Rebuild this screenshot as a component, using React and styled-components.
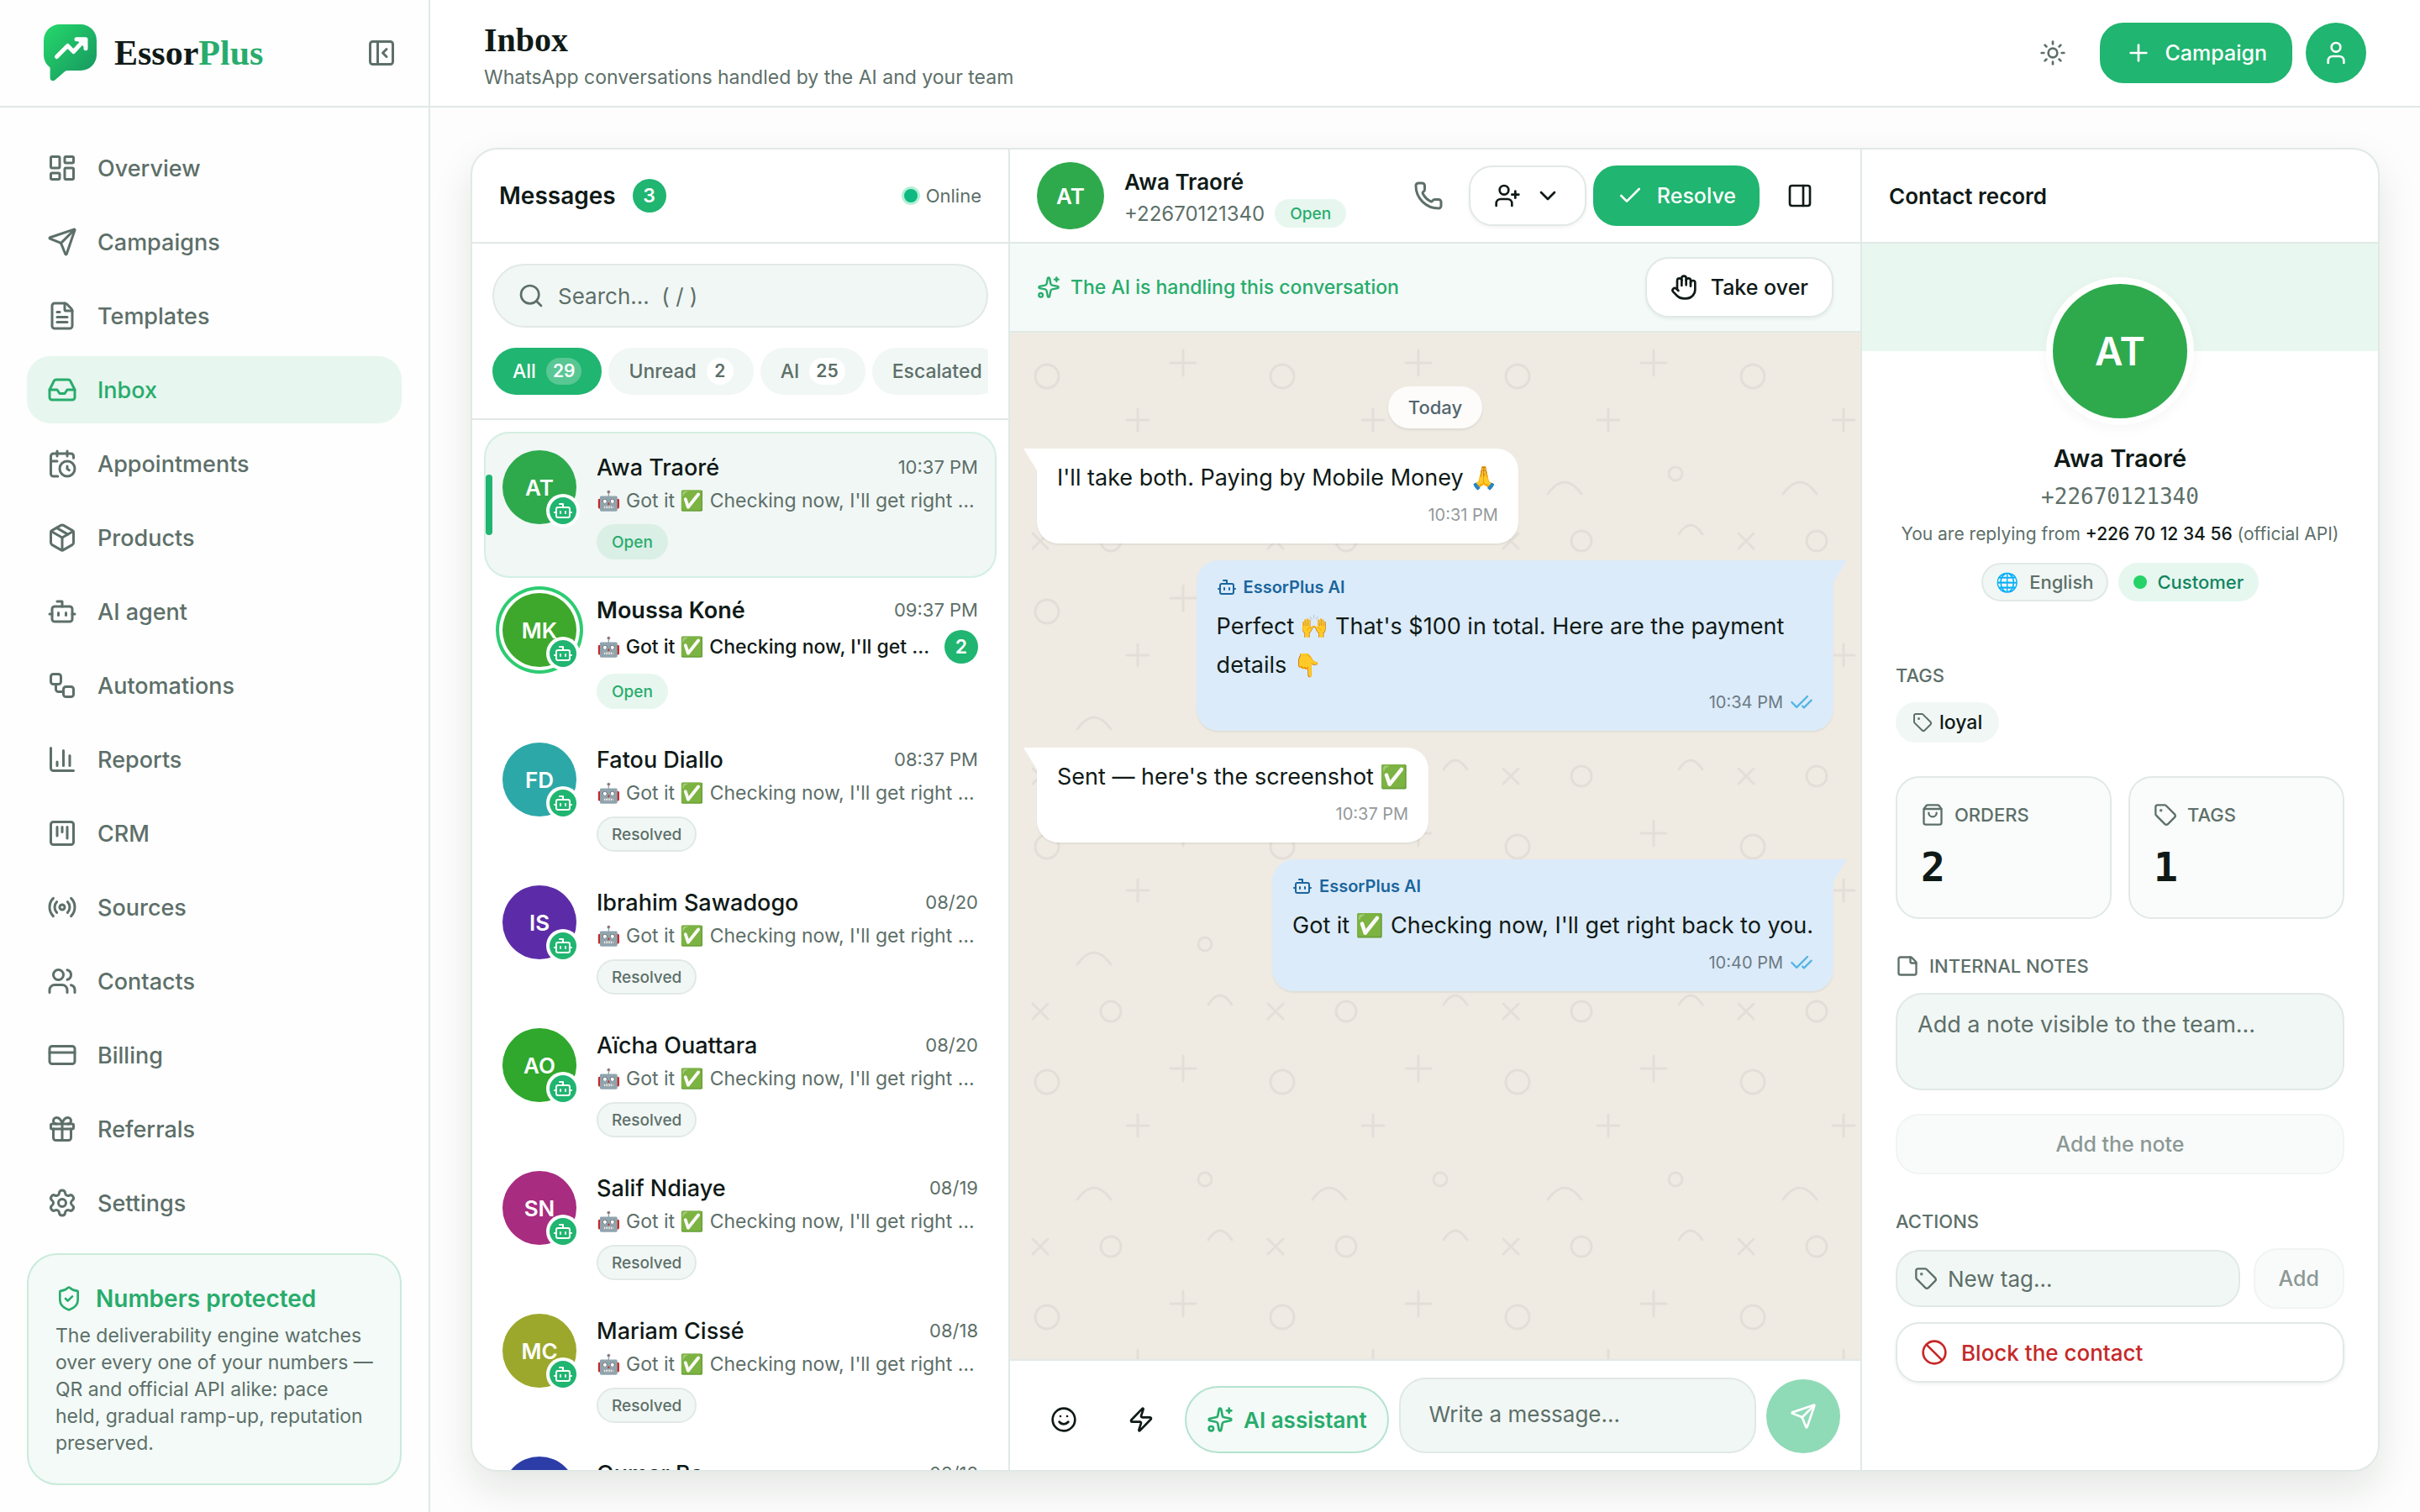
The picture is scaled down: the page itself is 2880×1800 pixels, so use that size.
import React from 'react';
import styled, { createGlobalStyle, css } from 'styled-components';
import {
  Ban, Bot, CalendarClock, ChartColumn, Check, CheckCheck, ChevronDown, CreditCard, FileText,
  Gift, Hand, Inbox, LayoutDashboard, Package, PanelLeftClose, PanelRight, Phone, Plus, Radio,
  Search, Send, Settings, ShieldCheck, ShoppingBag, Smile, Sparkles, SquareKanban, StickyNote,
  Sun, Tag, User, UserPlus, Users, Workflow, Zap,
} from 'lucide-react';

const colors = {
  primary: '#20b570',
  primaryText: '#28ac6c',
  soft: '#e7f6ef',
  softer: '#f3faf7',
  field: '#f1f7f5',
  border: '#e1e9e6',
  text: '#0f1a17',
  muted: '#5d6f69',
};

const GlobalStyle = createGlobalStyle`
  *, *::before, *::after {
    box-sizing: border-box;
  }

  body {
    margin: 0;
    background: #fcfdfc;
    color: ${colors.text};
    font-family: Inter, "Noto Color Emoji", sans-serif;
    font-size: 24px;
  }

  button, input, textarea {
    font: inherit;
    color: inherit;
    margin: 0;
  }

  h1, h2, h3, p, ul {
    margin: 0;
    padding: 0;
  }
`;

/* Shell */

const Shell = styled.div`
  display: grid;
  grid-template-columns: 512px minmax(0, 1fr);
  height: 100vh;
`;

const Sidebar = styled.aside`
  display: flex;
  flex-direction: column;
  min-height: 0;
  background: #fdfefd;
  border-right: 2px solid ${colors.border};
`;

const Brand = styled.div`
  flex: none;
  display: flex;
  align-items: center;
  height: 128px;
  padding: 0 32px 0 52px;
  border-bottom: 2px solid ${colors.border};
`;

const BrandName = styled.span`
  flex: 1;
  margin-left: 20px;
  font-family: "Liberation Serif", serif;
  font-size: 42px;
  font-weight: 700;

  span {
    color: ${colors.primaryText};
  }
`;

const IconButton = styled.button`
  flex: none;
  display: flex;
  align-items: center;
  justify-content: center;
  width: ${p => p.$size || 80}px;
  height: ${p => p.$size || 80}px;
  padding: 0;
  border: 0;
  border-radius: 50%;
  background: ${p => (p.$filled ? colors.primary : 'transparent')};
  color: ${p => (p.$filled ? '#fff' : p.$dark ? colors.text : colors.muted)};
`;

const Nav = styled.nav`
  flex: 1;
  display: flex;
  flex-direction: column;
  gap: 8px;
  min-height: 0;
  padding: 32px 32px 0;
`;

const NavLink = styled.a`
  flex: none;
  display: flex;
  align-items: center;
  gap: 24px;
  height: 80px;
  padding: 0 24px;
  border-radius: 28px;
  font-size: 27px;
  font-weight: 500;
  text-decoration: none;
  color: ${p => (p.$active ? colors.primaryText : colors.muted)};
  background: ${p => (p.$active ? colors.soft : 'transparent')};
`;

const Notice = styled.section`
  margin: 0 32px 32px;
  padding: 32px;
  border: 2px solid #c9ebdb;
  border-radius: 36px;
  background: ${colors.softer};
`;

const NoticeTitle = styled.h3`
  display: flex;
  align-items: center;
  gap: 16px;
  margin-bottom: 8px;
  font-size: 28px;
  line-height: 40px;
  font-weight: 600;
  color: ${colors.primaryText};
`;

const NoticeText = styled.p`
  font-size: 23px;
  line-height: 32px;
  color: ${colors.muted};
`;

const Main = styled.main`
  display: flex;
  flex-direction: column;
  min-width: 0;
  min-height: 0;
`;

const TopBar = styled.header`
  flex: none;
  display: flex;
  align-items: center;
  gap: 16px;
  height: 128px;
  padding: 0 64px;
  border-bottom: 2px solid ${colors.border};
  background: #fff;
`;

const PageTitle = styled.h1`
  font-family: "Liberation Serif", serif;
  font-size: 40px;
  line-height: 48px;
  font-weight: 700;
`;

const PageHeading = styled.div`
  flex: 1;
  padding-top: 10px;
`;

const PageSubtitle = styled.p`
  font-size: 23px;
  line-height: 40px;
  color: ${colors.muted};
`;

const Button = styled.button`
  display: flex;
  align-items: center;
  justify-content: ${p => (p.$start ? 'flex-start' : 'center')};
  gap: 16px;
  width: ${p => (p.$block ? '100%' : 'auto')};
  height: 72px;
  padding: 0 ${p => (p.$wide ? 28 : 26)}px;
  border: 2px solid ${colors.border};
  border-radius: 28px;
  background: #fff;
  box-shadow: 0 2px 4px rgba(15, 26, 23, 0.06);
  font-size: 25px;
  font-weight: 500;
  white-space: nowrap;

  ${p => p.$primary && css`
    border-color: ${colors.primary};
    background: ${colors.primary};
    box-shadow: none;
    color: #fff;
  `}

  ${p => p.$danger && css`
    font-size: 26px;
    color: #c62828;
  `}

  &:disabled {
    background: #f9fbfa;
    border-color: #f0f4f2;
    box-shadow: none;
    color: #8c9895;
  }
`;

const Panel = styled.div`
  flex: 1;
  display: grid;
  grid-template-columns: 640px minmax(0, 1fr) 614px;
  min-height: 0;
  margin: 48px;
  border: 2px solid ${colors.border};
  border-radius: 32px;
  background: #fff;
  box-shadow: 0 20px 48px rgba(15, 26, 23, 0.1);
  overflow: hidden;
`;

const Column = styled.section`
  display: flex;
  flex-direction: column;
  min-width: 0;
  min-height: 0;
  border-right: ${p => (p.$last ? '0' : `2px solid ${colors.border}`)};
`;

const ColumnHeader = styled.header`
  flex: none;
  display: flex;
  align-items: center;
  height: 112px;
  padding: 0 32px;
  border-bottom: 2px solid ${colors.border};
`;

const ColumnTitle = styled.h2`
  font-size: ${p => (p.$small ? 26 : 28)}px;
  font-weight: 600;
`;

/* Conversation list */

const CountBadge = styled.span`
  flex: none;
  display: flex;
  align-items: center;
  justify-content: center;
  width: 40px;
  height: 40px;
  border-radius: 50%;
  background: ${colors.primary};
  color: #fff;
  font-size: 23px;
  font-weight: 600;
`;

const ListHeader = styled(ColumnHeader)`
  gap: 20px;
`;

const OnlineStatus = styled.span`
  display: flex;
  align-items: center;
  gap: 10px;
  margin-left: auto;
  font-size: 22px;
  color: ${colors.muted};

  &::before {
    content: '';
    width: 16px;
    height: 16px;
    border-radius: 50%;
    background: #10b981;
    box-shadow: 0 0 0 3px #b4f0d6;
  }
`;

const Filters = styled.div`
  padding: 24px 24px 28px;
  border-bottom: 2px solid ${colors.border};
`;

const SearchBox = styled.label`
  display: flex;
  align-items: center;
  gap: 16px;
  height: 76px;
  padding: 0 28px;
  border: 2px solid ${colors.border};
  border-radius: 38px;
  background: ${colors.field};
  color: ${colors.muted};
`;

const PlainInput = styled.input`
  flex: 1;
  min-width: 0;
  padding: 0;
  border: 0;
  outline: 0;
  background: transparent;
  font-size: 26px;

  &::placeholder {
    color: ${colors.muted};
    opacity: 1;
  }
`;

const Chips = styled.div`
  display: flex;
  gap: 8px;
  margin-top: 24px;
  overflow: hidden;
`;

const Chip = styled.button`
  flex: none;
  display: flex;
  align-items: center;
  gap: 12px;
  height: 56px;
  padding: 0 24px;
  border: 0;
  border-radius: 28px;
  background: ${p => (p.$active ? colors.primary : colors.field)};
  color: ${p => (p.$active ? '#fff' : colors.muted)};
  font-size: 23px;
  font-weight: 500;

  span {
    min-width: 32px;
    padding: 0 8px;
    border-radius: 16px;
    background: ${p => (p.$active ? 'rgba(255, 255, 255, 0.25)' : '#fff')};
    font-size: 21px;
    line-height: 32px;
    font-weight: 600;
  }
`;

const Conversations = styled.ul`
  flex: 1;
  min-height: 0;
  padding: 16px;
  overflow: hidden;
  list-style: none;
`;

const Conversation = styled.li`
  position: relative;
  display: flex;
  gap: 24px;
  padding: 20px;
  border-radius: 28px;

  ${p => p.$active && css`
    background: ${colors.field};
    box-shadow: 0 0 0 2px #d3efe2;

    &::before {
      content: '';
      position: absolute;
      left: 0;
      top: 50%;
      width: 8px;
      height: 72px;
      margin-top: -36px;
      border-radius: 4px;
      background: ${colors.primary};
    }
  `}
`;

const Avatar = styled.div`
  position: relative;
  flex: none;
  display: flex;
  align-items: center;
  justify-content: center;
  width: ${p => p.$size || 88}px;
  height: ${p => p.$size || 88}px;
  border-radius: 50%;
  background: ${p => p.$color};
  color: #fff;
  font-size: ${p => p.$font || 26}px;
  font-weight: 600;
  box-shadow: ${p => (p.$ring ? '0 0 0 4px #fff, 0 0 0 8px #2ecc71' : 'none')};
`;

const BotMark = styled.span`
  position: absolute;
  right: 0;
  bottom: 0;
  display: flex;
  align-items: center;
  justify-content: center;
  width: 32px;
  height: 32px;
  border-radius: 50%;
  background: ${colors.primary};
  box-shadow: 0 0 0 4px #fff;
`;

const ConversationBody = styled.div`
  flex: 1;
  min-width: 0;
`;

const ConversationTop = styled.div`
  display: flex;
  align-items: center;
  justify-content: space-between;
  height: 40px;
  font-size: 22px;
  color: ${colors.muted};

  strong {
    font-size: 27px;
    font-weight: ${p => (p.$unread ? 600 : 500)};
    color: ${colors.text};
  }
`;

const ConversationPreview = styled.div`
  display: flex;
  align-items: center;
  gap: 16px;
  margin: 4px 0 12px;
  font-size: 23px;
  line-height: 32px;
  font-weight: ${p => (p.$unread ? 500 : 400)};
  color: ${p => (p.$unread ? colors.text : colors.muted)};

  p {
    flex: 1;
    overflow: hidden;
    text-overflow: ellipsis;
    white-space: nowrap;
  }
`;

const StatusTag = styled.span`
  display: inline-flex;
  align-items: center;
  height: ${p => (p.$compact ? 34 : 42)}px;
  padding: 0 16px;
  border: 2px solid ${p => (p.$open ? 'transparent' : colors.border)};
  border-radius: 21px;
  background: ${p => (p.$open ? 'rgba(32, 181, 112, 0.11)' : colors.field)};
  color: ${p => (p.$open ? colors.primaryText : colors.muted)};
  font-size: 19px;
  font-weight: 500;
`;

/* Chat */

const ChatHeader = styled(ColumnHeader)`
  gap: 8px;
`;

const ChatPerson = styled.div`
  flex: 1;
  margin-left: 16px;
  padding-top: 6px;

  strong {
    display: block;
    font-size: 26px;
    line-height: 36px;
    font-weight: 600;
  }
`;

const ChatNumber = styled.div`
  display: flex;
  align-items: center;
  gap: 12px;
  height: 38px;
  font-size: 24px;
  color: ${colors.muted};
`;

const HandlingBar = styled.div`
  flex: none;
  display: flex;
  align-items: center;
  gap: 12px;
  height: 106px;
  padding: 0 32px;
  border-bottom: 2px solid ${colors.border};
  background: ${colors.softer};
  color: ${colors.primaryText};
  font-size: 23px;
  font-weight: 500;

  ${Button} {
    margin-left: auto;
    color: ${colors.text};
  }
`;

const Thread = styled.div`
  position: relative;
  flex: 1;
  display: flex;
  flex-direction: column;
  gap: 20px;
  min-height: 0;
  padding: 64px 32px;
  overflow: hidden;
  background: #efebe3;
`;

const ThreadPattern = styled.svg`
  position: absolute;
  inset: 0;
  width: 100%;
  height: 100%;
`;

const DayLabel = styled.span`
  position: relative;
  align-self: center;
  margin-bottom: 4px;
  padding: 0 24px;
  border-radius: 25px;
  background: #fdfcfb;
  box-shadow: 0 2px 3px rgba(15, 26, 23, 0.08);
  color: #54656f;
  font-size: 22px;
  line-height: 50px;
  font-weight: 500;
`;

const Bubble = styled.article`
  position: relative;
  align-self: ${p => (p.$own ? 'flex-end' : 'flex-start')};
  max-width: 80%;
  padding: 12px 24px 17px;
  border-radius: ${p => (p.$own ? '26px 0 26px 26px' : '0 26px 26px 26px')};
  background: ${p => (p.$own ? '#dcebf9' : '#fff')};
  box-shadow: 0 2px 2px rgba(15, 26, 23, 0.06);
  font-size: 27px;
  line-height: 46px;

  &::before {
    content: '';
    position: absolute;
    top: 0;
    width: 16px;
    height: 26px;
    background: inherit;
    ${p => (p.$own
      ? 'left: 100%; clip-path: polygon(0 0, 100% 0, 0 100%);'
      : 'right: 100%; clip-path: polygon(0 0, 100% 0, 100% 100%);')}
  }
`;

const BubbleAuthor = styled.div`
  display: flex;
  align-items: center;
  gap: 8px;
  margin-bottom: 4px;
  font-size: 20px;
  line-height: 40px;
  font-weight: 600;
  color: #1a659e;
`;

const BubbleTime = styled.footer`
  display: flex;
  align-items: center;
  justify-content: flex-end;
  gap: 8px;
  margin-top: 4px;
  font-size: 20px;
  line-height: 34px;
  color: ${p => (p.$own ? '#6b7a84' : '#94999c')};

  svg {
    color: #53b5e4;
  }
`;

const Composer = styled.form`
  flex: none;
  display: flex;
  align-items: flex-end;
  gap: 12px;
  padding: 20px 24px;
  border-top: 2px solid ${colors.border};
`;

const AssistantButton = styled.button`
  display: flex;
  align-items: center;
  gap: 12px;
  height: 80px;
  padding: 0 24px;
  border: 2px solid #b5e3cf;
  border-radius: 40px;
  background: ${colors.softer};
  color: ${colors.primaryText};
  font-size: 26px;
  font-weight: 600;
  white-space: nowrap;
`;

const TextArea = styled.textarea`
  display: block;
  width: 100%;
  height: 116px;
  padding: 16px 24px;
  border: 2px solid ${colors.border};
  border-radius: 32px;
  outline: 0;
  resize: none;
  background: ${colors.field};
  font-size: 27px;
  line-height: 40px;

  &::placeholder {
    color: ${colors.muted};
    opacity: 1;
  }
`;

const MessageField = styled(TextArea)`
  flex: 1;
  min-width: 0;
  height: 90px;
  padding: 22px 34px;
  font-size: 26px;
`;

const SendButton = styled(IconButton)`
  background: #8fdab7;
  color: #fff;
`;

/* Contact record */

const Cover = styled.div`
  flex: none;
  height: 128px;
  background: #e9f7f1;
`;

const Profile = styled.div`
  display: flex;
  flex-direction: column;
  align-items: center;
  margin-top: -80px;

  h3 {
    margin-top: 28px;
    font-size: 29px;
    line-height: 40px;
    font-weight: 600;
  }
`;

const ProfileAvatar = styled(Avatar)`
  box-shadow: 0 0 0 8px #fff, 0 4px 16px 8px rgba(15, 26, 23, 0.04);
`;

const ProfileNumber = styled.p`
  margin-top: 8px;
  font-family: "DejaVu Sans Mono", monospace;
  font-size: 26px;
  line-height: 34px;
  color: ${colors.muted};
`;

const ProfileSender = styled.p`
  margin-top: 12px;
  font-size: 21px;
  line-height: 32px;
  color: ${colors.muted};

  b {
    font-weight: 500;
    color: ${colors.text};
  }
`;

const Pills = styled.div`
  display: flex;
  gap: 12px;
  margin-top: 18px;
`;

const Pill = styled.span`
  display: flex;
  align-items: center;
  gap: ${p => (p.$tag ? 8 : 12)}px;
  width: fit-content;
  height: ${p => (p.$tag ? 48 : 46)}px;
  padding: 0 ${p => (p.$tag ? 18 : 16)}px;
  border: 2px solid ${p => (p.$customer || p.$tag ? 'transparent' : colors.border)};
  border-radius: 24px;
  background: ${p => (p.$customer ? '#e6f7f0' : colors.field)};
  color: ${p => (p.$customer ? '#12855f' : p.$tag ? colors.text : colors.muted)};
  font-size: ${p => (p.$tag ? 23 : 22)}px;
  font-weight: 500;

  svg {
    color: ${colors.muted};
  }
`;

const Dot = styled.span`
  width: 16px;
  height: 16px;
  border-radius: 50%;
  background: #25d366;
`;

const Details = styled.div`
  display: flex;
  flex-direction: column;
  gap: 40px;
  margin-top: 72px;
  padding: 0 40px;
`;

const Group = styled.div`
  display: flex;
  flex-direction: column;
  gap: 16px;
`;

const Label = styled.label`
  display: flex;
  align-items: center;
  gap: 12px;
  font-size: 22px;
  line-height: 32px;
  font-weight: 500;
  text-transform: uppercase;
  color: ${colors.muted};
`;

const Stats = styled.div`
  display: grid;
  grid-template-columns: 1fr 1fr;
  gap: 20px;
`;

const Stat = styled.div`
  height: 170px;
  padding: 28px;
  border: 2px solid ${colors.border};
  border-radius: 28px;
  background: #f9fcfb;

  b {
    display: block;
    margin-top: 16px;
    font-family: "DejaVu Sans Mono", monospace;
    font-size: 48px;
    line-height: 60px;
    font-weight: 700;
  }
`;

const NoteForm = styled.div`
  display: flex;
  flex-direction: column;
  gap: 28px;
`;

const TagRow = styled.div`
  display: flex;
  align-items: center;
  gap: 16px;
`;

const TagField = styled.label`
  flex: 1;
  display: flex;
  align-items: center;
  gap: 12px;
  min-width: 0;
  height: 68px;
  padding: 0 20px;
  border: 2px solid ${colors.border};
  border-radius: 28px;
  background: ${colors.field};
  color: ${colors.muted};
`;

const NAV_ITEMS = [
  [LayoutDashboard, 'Overview'],
  [Send, 'Campaigns'],
  [FileText, 'Templates'],
  [Inbox, 'Inbox'],
  [CalendarClock, 'Appointments'],
  [Package, 'Products'],
  [Bot, 'AI agent'],
  [Workflow, 'Automations'],
  [ChartColumn, 'Reports'],
  [SquareKanban, 'CRM'],
  [Radio, 'Sources'],
  [Users, 'Contacts'],
  [CreditCard, 'Billing'],
  [Gift, 'Referrals'],
  [Settings, 'Settings'],
];

const FILTERS = [
  { label: 'All', count: 29, active: true },
  { label: 'Unread', count: 2 },
  { label: 'AI', count: 25 },
  { label: 'Escalated' },
];

const CONVERSATIONS = [
  { initials: 'AT', name: 'Awa Traoré', time: '10:37 PM', color: '#2eaa4d', open: true, active: true },
  { initials: 'MK', name: 'Moussa Koné', time: '09:37 PM', color: '#3ea82c', open: true, unread: 2 },
  { initials: 'FD', name: 'Fatou Diallo', time: '08:37 PM', color: '#2da8a8' },
  { initials: 'IS', name: 'Ibrahim Sawadogo', time: '08/20', color: '#5c2ca8' },
  { initials: 'AO', name: 'Aïcha Ouattara', time: '08/20', color: '#2fa82d' },
  { initials: 'SN', name: 'Salif Ndiaye', time: '08/19', color: '#a82c80' },
  { initials: 'MC', name: 'Mariam Cissé', time: '08/18', color: '#9ca82c' },
  { initials: 'OB', name: 'Oumar Ba', time: '08/18', color: '#2c3da8' },
];

const MESSAGES = [
  { text: "I'll take both. Paying by Mobile Money 🙏", time: '10:31 PM' },
  { text: "Perfect 🙌 That's $100 in total. Here are the payment details 👇", time: '10:34 PM', own: true },
  { text: "Sent — here's the screenshot ✅", time: '10:37 PM' },
  { text: "Got it ✅ Checking now, I'll get right back to you.", time: '10:40 PM', own: true },
];

const Logo = () => (
  <svg width="64" height="68" viewBox="0 0 64 68" aria-hidden="true">
    <defs>
      <linearGradient id="logo" x1="0" y1="0" x2="1" y2="1">
        <stop offset="0" stopColor="#25d96b" />
        <stop offset="1" stopColor="#16925f" />
      </linearGradient>
    </defs>
    <path
      fill="url(#logo)"
      d="M19 0h25a19 19 0 0 1 19 19v17a19 19 0 0 1-19 19H28c-1 0-2 .4-3 1.2L13.500 66.200C11 68.200 7.600 67 7.600 63.500V51.500A19 19 0 0 1 0 36V19A19 19 0 0 1 19 0z"
    />
    <g fill="none" stroke="#fff" strokeWidth="5" strokeLinecap="round" strokeLinejoin="round">
      <path d="M15.500 38.500L28.500 25.500l7 7L47 20" />
      <path d="M39 17.800h11v11" />
    </g>
    <path fill="#fff" d="M39 18h11v11z" />
  </svg>
);

const Pattern = () => (
  <ThreadPattern aria-hidden="true">
    <defs>
      <pattern id="doodles" width="280" height="280" patternUnits="userSpaceOnUse">
        <g fill="none" stroke="#e3ded7" strokeWidth="3" strokeLinecap="round">
          <circle cx="44" cy="52" r="14" />
          <path d="M206 21v30M191 36h30" />
          <path d="M152 91v26M139 104h26" />
          <circle cx="232" cy="168" r="8" />
          <path d="M80 192q20 -28 40 0" />
          <path d="M27 239l18 18M45 239l-18 18" />
          <circle cx="120" cy="248" r="12" />
          <path d="M236 240q14 -22 28 0" />
        </g>
      </pattern>
    </defs>
    <rect width="100%" height="100%" fill="url(#doodles)" />
  </ThreadPattern>
);

const ConversationItem = ({ initials, name, time, color, open, active, unread }) => (
  <Conversation $active={active}>
    <Avatar $color={color} $ring={Boolean(unread)}>
      {initials}
      <BotMark><Bot size={24} /></BotMark>
    </Avatar>
    <ConversationBody>
      <ConversationTop $unread={unread}>
        <strong>{name}</strong>
        <time>{time}</time>
      </ConversationTop>
      <ConversationPreview $unread={unread}>
        <p>🤖 Got it ✅ Checking now, I'll get right back to you.</p>
        {unread && <CountBadge>{unread}</CountBadge>}
      </ConversationPreview>
      <StatusTag $open={open}>{open ? 'Open' : 'Resolved'}</StatusTag>
    </ConversationBody>
  </Conversation>
);

const Message = ({ text, time, own }) => (
  <Bubble $own={own}>
    {own && <BubbleAuthor><Bot size={24} />EssorPlus AI</BubbleAuthor>}
    <p>{text}</p>
    <BubbleTime $own={own}>
      {time}
      {own && <CheckCheck size={28} />}
    </BubbleTime>
  </Bubble>
);

const SideNav = () => (
  <Sidebar>
    <Brand>
      <Logo />
      <BrandName>Essor<span>Plus</span></BrandName>
      <IconButton $size={48} type="button" aria-label="Collapse menu"><PanelLeftClose size={36} /></IconButton>
    </Brand>
    <Nav>
      {NAV_ITEMS.map(([Icon, label]) => (
        <NavLink key={label} href="#" $active={label === 'Inbox'}>
          <Icon size={36} />
          {label}
        </NavLink>
      ))}
    </Nav>
    <Notice>
      <NoticeTitle><ShieldCheck size={32} />Numbers protected</NoticeTitle>
      <NoticeText>
        The deliverability engine watches over every one of your numbers — QR and official API
        alike: pace held, gradual ramp-up, reputation preserved.
      </NoticeText>
    </Notice>
  </Sidebar>
);

const ConversationList = () => (
  <Column>
    <ListHeader>
      <ColumnTitle>Messages</ColumnTitle>
      <CountBadge>3</CountBadge>
      <OnlineStatus>Online</OnlineStatus>
    </ListHeader>
    <Filters>
      <SearchBox>
        <Search size={32} />
        <PlainInput type="search" placeholder="Search… &nbsp;( / )" aria-label="Search" />
      </SearchBox>
      <Chips>
        {FILTERS.map(({ label, count, active }) => (
          <Chip key={label} type="button" $active={active}>
            {label}
            {count && <span>{count}</span>}
          </Chip>
        ))}
      </Chips>
    </Filters>
    <Conversations>
      {CONVERSATIONS.map(item => <ConversationItem key={item.name} {...item} />)}
    </Conversations>
  </Column>
);

const Chat = () => (
  <Column>
    <ChatHeader>
      <Avatar $color="#2eaa4d" $size={80}>AT</Avatar>
      <ChatPerson>
        <strong>Awa Traoré</strong>
        <ChatNumber>
          +22670121340
          <StatusTag $open $compact>Open</StatusTag>
        </ChatNumber>
      </ChatPerson>
      <IconButton type="button" aria-label="Call"><Phone size={36} /></IconButton>
      <Button type="button" $wide aria-label="Assign">
        <UserPlus size={32} />
        <ChevronDown size={32} />
      </Button>
      <Button type="button" $primary><Check size={32} />Resolve</Button>
      <IconButton type="button" $dark aria-label="Toggle contact record"><PanelRight size={32} /></IconButton>
    </ChatHeader>
    <HandlingBar>
      <Sparkles size={28} />
      The AI is handling this conversation
      <Button type="button" $wide><Hand size={32} />Take over</Button>
    </HandlingBar>
    <Thread>
      <Pattern />
      <DayLabel>Today</DayLabel>
      {MESSAGES.map(message => <Message key={message.time} {...message} />)}
    </Thread>
    <Composer>
      <IconButton type="button" $dark aria-label="Emoji"><Smile size={32} /></IconButton>
      <IconButton type="button" $dark aria-label="Quick replies"><Zap size={32} /></IconButton>
      <AssistantButton type="button"><Sparkles size={32} />AI assistant</AssistantButton>
      <MessageField placeholder="Write a message…" aria-label="Message" />
      <SendButton $size={88} type="submit" disabled aria-label="Send"><Send size={32} /></SendButton>
    </Composer>
  </Column>
);

const ContactRecord = () => (
  <Column $last>
    <ColumnHeader>
      <ColumnTitle $small>Contact record</ColumnTitle>
    </ColumnHeader>
    <Cover />
    <Profile>
      <ProfileAvatar $color="#2eaa4d" $size={160} $font={46}>AT</ProfileAvatar>
      <h3>Awa Traoré</h3>
      <ProfileNumber>+22670121340</ProfileNumber>
      <ProfileSender>You are replying from <b>+226 70 12 34 56</b> (official API)</ProfileSender>
      <Pills>
        <Pill><span>🌐</span>English</Pill>
        <Pill $customer><Dot />Customer</Pill>
      </Pills>
    </Profile>
    <Details>
      <Group>
        <Label as="h3">Tags</Label>
        <Pill $tag><Tag size={24} />loyal</Pill>
      </Group>
      <Stats>
        <Stat>
          <Label as="h3"><ShoppingBag size={28} />Orders</Label>
          <b>2</b>
        </Stat>
        <Stat>
          <Label as="h3"><Tag size={28} />Tags</Label>
          <b>1</b>
        </Stat>
      </Stats>
      <Group>
        <Label htmlFor="note"><StickyNote size={28} />Internal notes</Label>
        <NoteForm>
          <TextArea id="note" placeholder="Add a note visible to the team…" />
          <Button type="button" disabled $block>Add the note</Button>
        </NoteForm>
      </Group>
      <Group>
        <Label as="h3">Actions</Label>
        <TagRow>
          <TagField>
            <Tag size={28} />
            <PlainInput type="text" placeholder="New tag…" aria-label="New tag" />
          </TagField>
          <Button type="button" disabled $wide>Add</Button>
        </TagRow>
        <Button type="button" $block $start $wide $danger><Ban size={32} />Block the contact</Button>
      </Group>
    </Details>
  </Column>
);

const App = () => (
  <>
    <GlobalStyle />
    <Shell>
      <SideNav />
      <Main>
        <TopBar>
          <PageHeading>
            <PageTitle>Inbox</PageTitle>
            <PageSubtitle>WhatsApp conversations handled by the AI and your team</PageSubtitle>
          </PageHeading>
          <IconButton type="button" aria-label="Switch theme"><Sun size={32} /></IconButton>
          <Button type="button" $primary $wide><Plus size={32} />Campaign</Button>
          <IconButton type="button" $size={72} $filled aria-label="Account"><User size={32} /></IconButton>
        </TopBar>
        <Panel>
          <ConversationList />
          <Chat />
          <ContactRecord />
        </Panel>
      </Main>
    </Shell>
  </>
);

export default App;
